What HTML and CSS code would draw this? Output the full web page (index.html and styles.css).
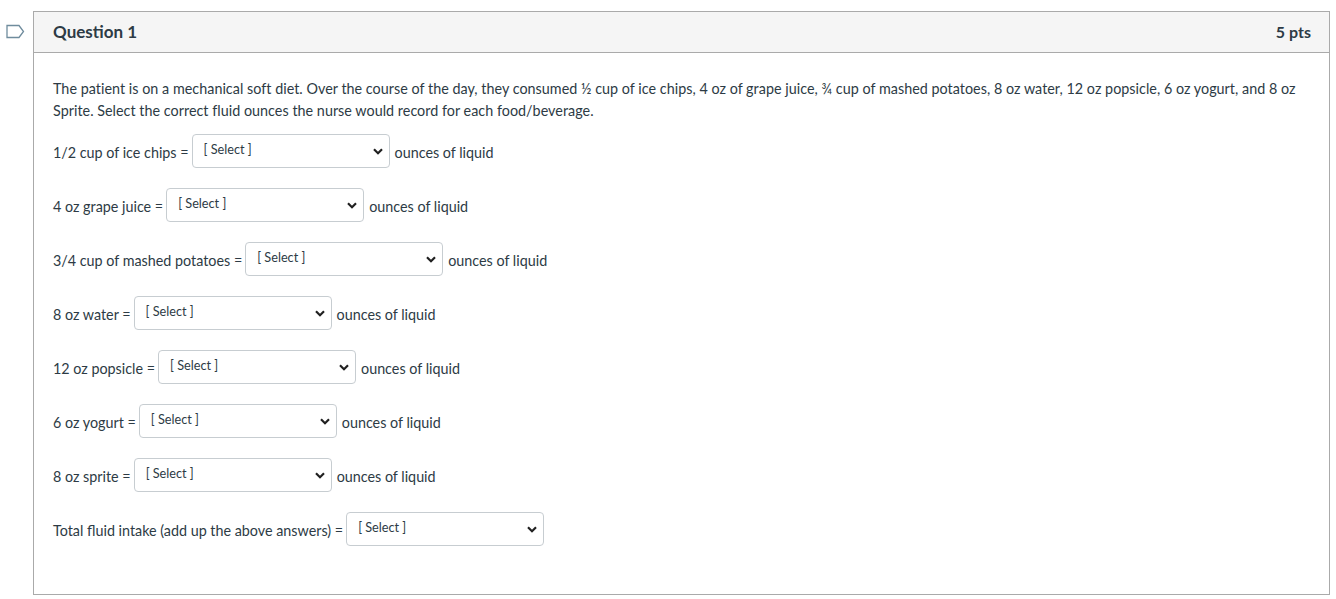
FILE: index.html
```html
<!DOCTYPE html>
<html>
<head>
<meta charset="utf-8">
<link rel="stylesheet" href="styles.css">
</head>
<body>
<div class="page">
  <div class="flag">
    <svg width="19" height="15" viewBox="0 0 19 15"><path d="M1 1.5 H13 L17.5 7.5 L13 13.5 H1 Z" fill="none" stroke="#6f8c9d" stroke-width="1.3"/></svg>
  </div>
  <div class="question">
    <div class="q-header">
      <span class="q-title">Question 1</span>
      <span class="q-pts">5 pts</span>
    </div>
    <div class="q-body">
      <p class="q-text">The patient is on a mechanical soft diet. Over the course of the day, they consumed ½ cup of ice chips, 4 oz of grape juice, ¾ cup of mashed potatoes, 8 oz water, 12 oz popsicle, 6 oz yogurt, and 8 oz Sprite. Select the correct fluid ounces the nurse would record for each food/beverage.</p>
      <div class="row"><span class="lbl">1/2 cup of ice chips =</span><select class="sel"><option>[ Select ]</option></select><span class="lbl after">ounces of liquid</span></div>
      <div class="row"><span class="lbl">4 oz grape juice =</span><select class="sel"><option>[ Select ]</option></select><span class="lbl after">ounces of liquid</span></div>
      <div class="row"><span class="lbl">3/4 cup of mashed potatoes =</span><select class="sel"><option>[ Select ]</option></select><span class="lbl after">ounces of liquid</span></div>
      <div class="row"><span class="lbl">8 oz water =</span><select class="sel"><option>[ Select ]</option></select><span class="lbl after">ounces of liquid</span></div>
      <div class="row"><span class="lbl">12 oz popsicle =</span><select class="sel"><option>[ Select ]</option></select><span class="lbl after">ounces of liquid</span></div>
      <div class="row"><span class="lbl">6 oz yogurt =</span><select class="sel"><option>[ Select ]</option></select><span class="lbl after">ounces of liquid</span></div>
      <div class="row"><span class="lbl">8 oz sprite =</span><select class="sel"><option>[ Select ]</option></select><span class="lbl after">ounces of liquid</span></div>
      <div class="row"><span class="lbl">Total fluid intake (add up the above answers) =</span><select class="sel"><option>[ Select ]</option></select></div>
    </div>
  </div>
</div>
</body>
</html>
```
FILE: styles.css
```css
html, body {
  margin: 0;
  padding: 0;
  background: #fff;
}
body {
  font-family: Lato, "Noto Sans", sans-serif;
  color: #2d3b45;
}
.page {
  display: flex;
  align-items: flex-start;
  padding-top: 11px;
  width: 1330px;
}
.flag {
  width: 33px;
  flex: none;
  padding-top: 13px;
  padding-left: 6px;
  box-sizing: border-box;
  line-height: 0;
}
.question {
  width: 1297px;
  box-sizing: border-box;
  border: 1px solid #aaaaaa;
  height: 584px;
}
.q-header {
  display: flex;
  justify-content: space-between;
  align-items: center;
  height: 41px;
  box-sizing: border-box;
  background: #f5f5f5;
  border-bottom: 1px solid #aaaaaa;
  padding: 0 18px 2px 19px;
  font-weight: bold;
  font-size: 17px;
  color: #2d3b45;
}
.q-pts {
  font-size: 16px;
}
.q-body {
  padding: 25px 19px 0 19px;
}
.q-text {
  margin: 0 0 13px 0;
  font-size: 14.33px;
  line-height: 21.5px;
  letter-spacing: 0.002em;
}
.row {
  display: flex;
  align-items: center;
  height: 34px;
  margin-bottom: 20px;
  font-size: 14.33px;
}
.lbl {
  padding-top: 3px;
  white-space: nowrap;
}
.after {
  margin-left: 5px;
}
.sel {
  margin-left: 3px;
  width: 198px;
  height: 34px;
  box-sizing: border-box;
  border: 1px solid #c7cdd1;
  border-radius: 4px;
  background-color: #fff;
  font-family: Lato, "Noto Sans", sans-serif;
  font-size: 12.7px;
  color: #2d3b45;
  padding: 0 0 4px 11px;
  -webkit-appearance: none;
  appearance: none;
  background-image: url("data:image/svg+xml;utf8,<svg xmlns='http://www.w3.org/2000/svg' width='10' height='7' viewBox='0 0 10 7'><path d='M1 1.2 L5 5.2 L9 1.2' fill='none' stroke='%23222' stroke-width='2.2'/></svg>");
  background-repeat: no-repeat;
  background-position: right 6px center;
}
```
